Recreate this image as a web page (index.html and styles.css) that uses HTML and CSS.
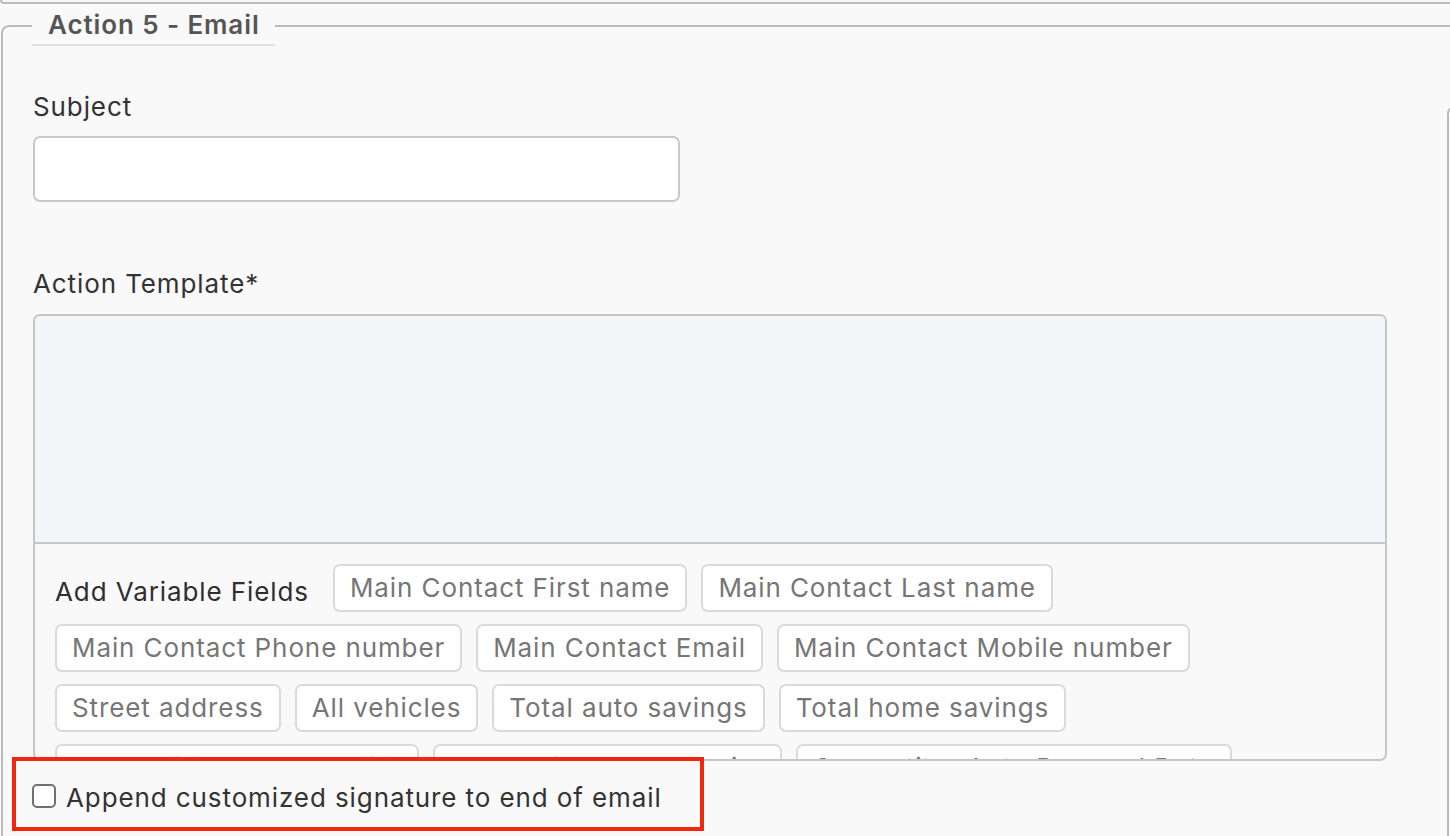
FILE: index.html
```html
<!DOCTYPE html>
<html lang="en">
<head>
<meta charset="utf-8">
<title>Action 5 - Email</title>
<link rel="stylesheet" href="styles.css">
</head>
<body>
  <div class="prev-section"></div>
  <fieldset class="action">
    <legend class="action-legend">Action 5 - Email</legend>
    <div class="action-body">
      <div class="form">
        <label class="field-label" for="subject">Subject</label>
        <input class="text-input" id="subject" type="text">
        <label class="field-label template-label">Action Template*</label>
        <div class="template">
          <div class="template-editor"></div>
          <div class="variables">
            <span class="variables-title">Add Variable Fields</span>
            <span class="tag">Main Contact First name</span>
            <span class="tag">Main Contact Last name</span>
            <span class="tag">Main Contact Phone number</span>
            <span class="tag">Main Contact Email</span>
            <span class="tag">Main Contact Mobile number</span>
            <span class="tag">Street address</span>
            <span class="tag">All vehicles</span>
            <span class="tag">Total auto savings</span>
            <span class="tag">Total home savings</span>
            <span class="tag">Competitor Home Carrier</span>
            <span class="tag">Competitor Auto Carrier</span>
            <span class="tag">Competitor Auto Renewal Date</span>
            <span class="tag">Competitor Home Renewal Date</span>
          </div>
        </div>
        <label class="signature">
          <input class="signature-check" type="checkbox">
          <span>Append customized signature to end of email</span>
        </label>
      </div>
      <div class="side-panel"></div>
    </div>
  </fieldset>
  <div class="annotation"></div>
</body>
</html>
```
FILE: styles.css
```css
html, body {
  margin: 0;
  padding: 0;
}

body {
  width: 1450px;
  height: 836px;
  overflow: hidden;
  position: relative;
  background: #f9f9f9;
  font-family: Inter, "Noto Sans", "Liberation Sans", sans-serif;
  font-size: 26px;
  line-height: 32px;
  letter-spacing: 0.9px;
  color: #333333;
}

.prev-section {
  height: 2px;
  width: 1500px;
  border-left: 2px solid #bbbbbb;
  border-bottom: 2px solid #bbbbbb;
  border-bottom-left-radius: 6px;
}

.action {
  box-sizing: border-box;
  width: 1520px;
  margin: 1px 0 0 1px;
  padding: 0 0 40px 29px;
  border: 2px solid #bbbbbb;
  border-radius: 8px;
}

.action-legend {
  padding: 4px 15px 3px 16px;
  margin-left: 0;
  font-weight: 600;
  color: #555555;
  border-bottom: 2px solid #e2e2e2;
}

.action-body {
  display: flex;
  align-items: flex-start;
  padding-top: 45px;
}

.form {
  width: 1415px;
  flex: none;
  display: flex;
  flex-direction: column;
  align-items: flex-start;
}

.side-panel {
  flex: none;
  width: 80px;
  height: 900px;
  margin-top: 16px;
  border-left: 2px solid #bbbbbb;
  border-top: 2px solid #bbbbbb;
  border-top-left-radius: 6px;
}

.field-label {
  display: block;
  padding-left: 1px;
}

.text-input {
  box-sizing: border-box;
  width: 647px;
  height: 66px;
  margin: 13px 0 0 1px;
  border: 2px solid #c8c8c8;
  border-radius: 7px;
  background: #ffffff;
  font: inherit;
  padding: 0 14px;
}

.template-label {
  margin-top: 66px;
}

.template {
  box-sizing: border-box;
  width: 1354px;
  height: 447px;
  margin: 14px 0 0 1px;
  border: 2px solid #c6c6c6;
  border-radius: 7px;
  overflow: hidden;
  display: flex;
  flex-direction: column;
}

.template-editor {
  flex: none;
  height: 226px;
  background: #f4f5f9;
  border-bottom: 2px solid #c6c6c6;
}

.variables {
  flex: 1;
  min-height: 0;
  overflow: hidden;
  display: flex;
  flex-wrap: wrap;
  align-items: flex-start;
  align-content: flex-start;
  gap: 12px 14px;
  padding: 20px 20px 0 20px;
}

.variables-title {
  padding-top: 12px;
  margin-right: 10px;
  color: #2e2e2e;
}

.tag {
  padding: 6px 15px 6px 15px;
  border: 2px solid #dadada;
  border-radius: 7px;
  background: #ffffff;
  color: #767676;
  white-space: nowrap;
}

.signature {
  display: flex;
  align-items: flex-start;
  gap: 10px;
  margin-top: 21px;
  color: #333333;
}

.signature-check {
  appearance: none;
  -webkit-appearance: none;
  box-sizing: border-box;
  width: 24px;
  height: 24px;
  margin: 2px 0 0 0;
  border: 2px solid #707070;
  border-radius: 5px;
  background: #ffffff;
}

.annotation {
  position: absolute;
  left: 12px;
  top: 757px;
  width: 692px;
  height: 74px;
  box-sizing: border-box;
  border: 4px solid #f5260e;
}
```
